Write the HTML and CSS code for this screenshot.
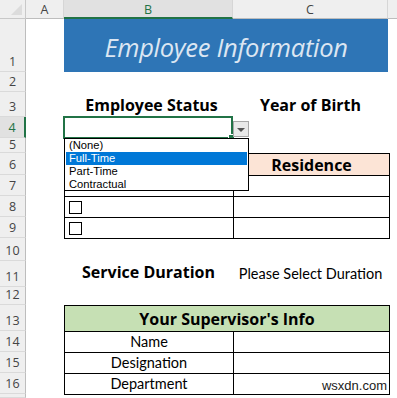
FILE: index.html
```html
<!DOCTYPE html>
<html>
<head>
<meta charset="utf-8">
<link rel="stylesheet" href="styles.css">
</head>
<body>
<div class="sheet">
  <div class="corner"><span class="tri"></span></div>
  <div class="ch">A</div>
  <div class="ch sel">B</div>
  <div class="ch">C</div>
  <div class="ch last"></div>

  <div class="rh tall">1</div>
  <div class="rh">2</div>
  <div class="rh">3</div>
  <div class="rh rsel">4</div>
  <div class="rh short">5</div>
  <div class="rh">6</div>
  <div class="rh">7</div>
  <div class="rh">8</div>
  <div class="rh">9</div>
  <div class="rh">10</div>
  <div class="rh">11</div>
  <div class="rh">12</div>
  <div class="rh">13</div>
  <div class="rh">14</div>
  <div class="rh">15</div>
  <div class="rh">16</div>
  <div class="rh end"></div>

  <div class="title">Employee Information</div>
  <div class="label lb-status">Employee Status</div>
  <div class="label lb-year">Year of Birth</div>
  <div class="active-cell"><span class="handle"></span></div>

  <div class="box box1">
    <table class="grid-table">
      <colgroup><col class="col-b"><col class="col-c"></colgroup>
      <tr class="r22"><td class="peach"></td><td class="peach">Residence</td></tr>
      <tr><td></td><td></td></tr>
      <tr><td class="chk"><span class="checkbox"></span></td><td></td></tr>
      <tr><td class="chk"><span class="checkbox"></span></td><td></td></tr>
    </table>
  </div>

  <div class="label lb-service">Service Duration</div>
  <div class="plain lb-select">Please Select Duration</div>

  <div class="box box2">
    <table class="grid-table">
      <colgroup><col class="col-b"><col class="col-c"></colgroup>
      <tr class="r26"><td class="green" colspan="2">Your Supervisor's Info</td></tr>
      <tr><td class="txt">Name</td><td></td></tr>
      <tr><td class="txt">Designation</td><td></td></tr>
      <tr><td class="txt">Department</td><td class="wm-cell"><span class="wm">wsxdn.com</span></td></tr>
    </table>
  </div>

  <div class="dd-btn"><span class="dd-tri"></span></div>
  <ul class="dropdown">
    <li>(None)</li>
    <li class="hl">Full-Time</li>
    <li>Part-Time</li>
    <li>Contractual</li>
  </ul>
</div>
</body>
</html>
```

FILE: styles.css
```css
html, body {
  margin: 0;
  padding: 0;
  background: #ffffff;
}

.sheet {
  position: relative;
  display: grid;
  grid-template-columns: 26px 38px 169px 155px 9px;
  grid-template-rows: 19px 53px 20px 25px 21px 15px 22px 21px 21px 21px 23px 26px 18px 26px 21px 21px 21px 4px;
  width: 397px;
  height: 398px;
  overflow: hidden;
  font-family: Lato, "Open Sans", sans-serif;
  color: #000;
}

.corner {
  background: #efefef;
  border-right: 1px solid #c8c8c8;
  border-bottom: 1px solid #c8c8c8;
  box-sizing: border-box;
  position: relative;
}
.tri {
  position: absolute;
  right: 3px;
  bottom: 3px;
  width: 0;
  height: 0;
  border-left: 11px solid transparent;
  border-bottom: 11px solid #dcdcdc;
}

.ch {
  background: #efefef;
  border-right: 1px solid #d6d6d6;
  border-bottom: 1px solid #bdbdbd;
  box-sizing: border-box;
  display: flex;
  align-items: center;
  justify-content: center;
  font-family: "Open Sans", sans-serif;
  font-size: 12.5px;
  color: #444;
  padding-top: 1px;
}
.ch.sel {
  background: #e1e1e1;
  color: #217346;
  border-bottom: 2px solid #217346;
}
.ch.last {
  border-right: none;
}

.rh {
  grid-column: 1;
  background: #efefef;
  border-right: 1px solid #bdbdbd;
  border-bottom: 1px solid #dadada;
  box-sizing: border-box;
  display: flex;
  align-items: flex-end;
  justify-content: center;
  padding-bottom: 1px;
  font-family: "Open Sans", sans-serif;
  font-size: 12.5px;
  color: #444;
  line-height: 16px;
}
.rh.short {
  padding-bottom: 0;
  line-height: 14px;
}
.rh.rsel {
  background: #e1e1e1;
  color: #217346;
  border-right: 2px solid #217346;
}

.title {
  grid-row: 2;
  grid-column: 3 / 5;
  background: #2e75b6;
  display: flex;
  align-items: center;
  justify-content: center;
  font-family: "Open Sans", sans-serif;
  font-style: italic;
  font-size: 25.5px;
  color: #dce6f2;
  padding-top: 2px;
  letter-spacing: -0.3px;
}

.label {
  font-family: "Open Sans", sans-serif;
  font-weight: bold;
  font-size: 16px;
  display: flex;
  align-items: flex-end;
  justify-content: center;
  padding-bottom: 1px;
}
.plain {
  font-size: 14.5px;
  display: flex;
  align-items: flex-end;
  justify-content: center;
  padding-bottom: 5px;
}
.lb-status { grid-row: 4; grid-column: 3; padding-left: 6px; }
.lb-year { grid-row: 4; grid-column: 4; }
.lb-service { grid-row: 12; grid-column: 3; padding-bottom: 4px; }
.lb-select { grid-row: 12; grid-column: 4; }

.active-cell {
  grid-row: 5;
  grid-column: 3;
  border: 2px solid #217346;
  margin: -1px 0 -1px -1px;
  position: relative;
  z-index: 2;
}
.handle {
  position: absolute;
  right: -4px;
  bottom: -4px;
  width: 5px;
  height: 5px;
  background: #217346;
  border: 1px solid #fff;
}

.box {
  position: relative;
}
.box1 { grid-row: 7 / 11; grid-column: 3 / 5; }
.box2 { grid-row: 14 / 18; grid-column: 3 / 5; }

.grid-table {
  border-collapse: collapse;
  width: 325px;
  table-layout: fixed;
}
.col-b { width: 169px; }
.col-c { width: 156px; }
.grid-table td {
  border: 1px solid #000;
  height: 20px;
  padding: 0;
  font-size: 14.5px;
  line-height: 18px;
  text-align: center;
}
.grid-table .r22 td {
  height: 21px;
}
.grid-table .r26 td {
  height: 25px;
}
.grid-table td.peach {
  background: #fce4d6;
  font-family: "Open Sans", sans-serif;
  font-weight: bold;
  font-size: 16px;
}
.grid-table td.green {
  background: #c6e0b4;
  font-family: "Open Sans", sans-serif;
  font-weight: bold;
  font-size: 16px;
}
.grid-table td.chk {
  text-align: left;
  padding-left: 4px;
}
.checkbox {
  display: block;
  width: 11px;
  height: 11px;
  border: 1px solid #000;
}
.grid-table td.wm-cell {
  text-align: right;
  vertical-align: bottom;
  padding-right: 2px;
}
.wm {
  font-family: "Liberation Sans", Arial, sans-serif;
  font-size: 13px;
  color: #1a1a1a;
  line-height: 14px;
}

.dd-btn {
  position: absolute;
  left: 233px;
  top: 121px;
  width: 16px;
  height: 16px;
  box-sizing: border-box;
  background: #e9e9e9;
  border: 1px solid #a8a8a8;
  display: flex;
  align-items: center;
  justify-content: center;
  z-index: 3;
}
.dd-tri {
  width: 0;
  height: 0;
  border-left: 4px solid transparent;
  border-right: 4px solid transparent;
  border-top: 4px solid #555;
  margin-top: 1px;
}

.dropdown {
  position: absolute;
  left: 64px;
  top: 138px;
  width: 185px;
  height: 53px;
  box-sizing: border-box;
  margin: 0;
  padding: 0 1px;
  list-style: none;
  background: #fff;
  border: 1px solid #000;
  z-index: 4;
  font-family: "Liberation Sans", Arial, sans-serif;
  font-size: 11.2px;
  color: #000;
}
.dropdown li {
  height: 13px;
  line-height: 13px;
  padding-left: 3px;
  overflow: hidden;
}
.dropdown li.hl {
  background: #0078d7;
  color: #fff;
}
```
